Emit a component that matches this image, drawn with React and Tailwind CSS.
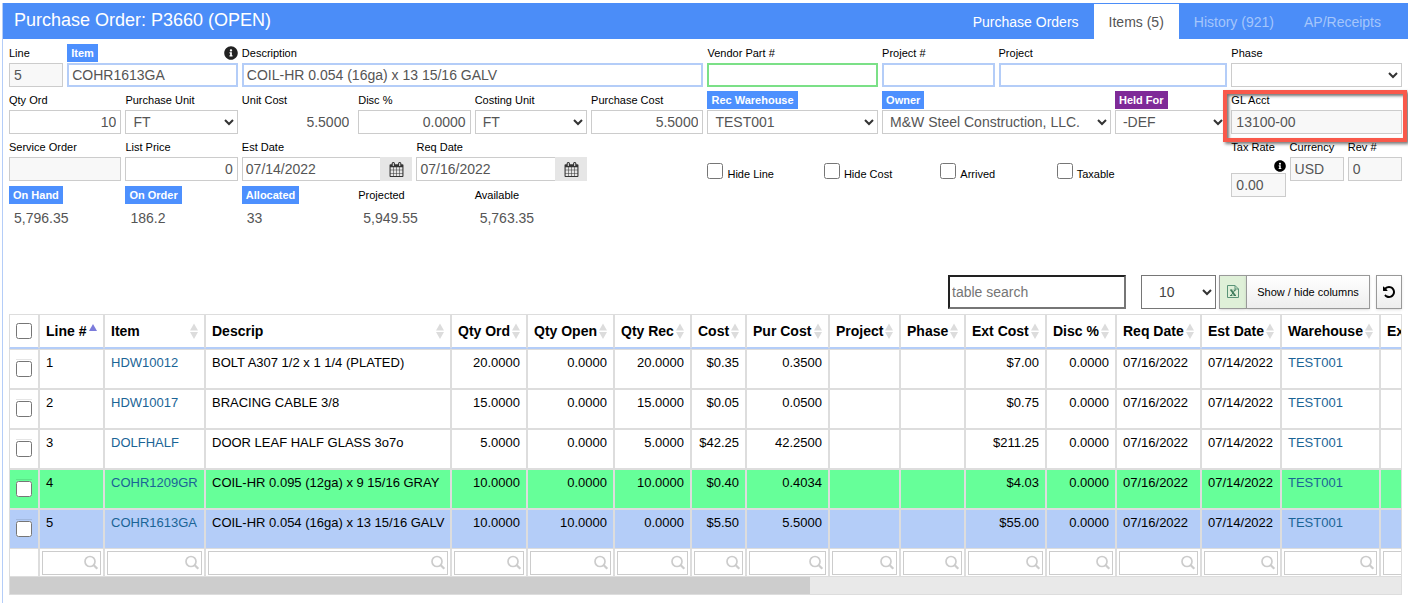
import React, { useState } from "react";
import { FaInfoCircle } from "react-icons/fa";

const lineItems = [
  { line: 1, item: "HDW10012", descrip: "BOLT A307 1/2 x 1 1/4 (PLATED)", qtyOrd: "20.0000", qtyOpen: "0.0000", qtyRec: "20.0000", cost: "$0.35", purCost: "0.3500", extCost: "$7.00", color: "" },
  { line: 2, item: "HDW10017", descrip: "BRACING CABLE 3/8", qtyOrd: "15.0000", qtyOpen: "0.0000", qtyRec: "15.0000", cost: "$0.05", purCost: "0.0500", extCost: "$0.75", color: "" },
  { line: 3, item: "DOLFHALF", descrip: "DOOR LEAF HALF GLASS 3o7o", qtyOrd: "5.0000", qtyOpen: "0.0000", qtyRec: "5.0000", cost: "$42.25", purCost: "42.2500", extCost: "$211.25", color: "" },
  { line: 4, item: "COHR1209GR", descrip: "COIL-HR 0.095 (12ga) x 9 15/16 GRAY", qtyOrd: "10.0000", qtyOpen: "0.0000", qtyRec: "10.0000", cost: "$0.40", purCost: "0.4034", extCost: "$4.03", color: "bg-[#66ff99]" },
  { line: 5, item: "COHR1613GA", descrip: "COIL-HR 0.054 (16ga) x 13 15/16 GALV", qtyOrd: "10.0000", qtyOpen: "10.0000", qtyRec: "0.0000", cost: "$5.50", purCost: "5.5000", extCost: "$55.00", color: "bg-[#b4cdf8]" },
];

const columns = [
  { key: "line", title: "Line #", width: "w-[65px]", sorted: true },
  { key: "item", title: "Item", width: "w-[101px]", link: true },
  { key: "descrip", title: "Descrip", width: "w-[246px]" },
  { key: "qtyOrd", title: "Qty Ord", width: "w-[76px]", right: true },
  { key: "qtyOpen", title: "Qty Open", width: "w-[87px]", right: true },
  { key: "qtyRec", title: "Qty Rec", width: "w-[77px]", right: true },
  { key: "cost", title: "Cost", width: "w-[55px]", right: true },
  { key: "purCost", title: "Pur Cost", width: "w-[83px]", right: true },
  { key: "project", title: "Project", width: "w-[71px]" },
  { key: "phase", title: "Phase", width: "w-[65px]" },
  { key: "extCost", title: "Ext Cost", width: "w-[81px]", right: true },
  { key: "disc", title: "Disc %", width: "w-[70px]", right: true },
  { key: "reqDate", title: "Req Date", width: "w-[85px]" },
  { key: "estDate", title: "Est Date", width: "w-[80px]" },
  { key: "warehouse", title: "Warehouse", width: "w-[99px]", link: true },
  { key: "extWeight", title: "Ext Weight", width: "w-[104px]", right: true },
];

// Same on every line of this order
const defaults = { disc: "0.0000", reqDate: "07/16/2022", estDate: "07/14/2022", warehouse: "TEST001" };

const inputBase = "block h-6 w-full min-w-0 text-sm text-[#555] outline-none";
const borders = {
  gray: "border border-[#ccc] px-1",
  blue: "border-2 border-[#b4cdf8] px-[3px]",
  green: "border-2 border-[#7be087] px-[3px]",
  none: "border border-transparent px-1",
};

const CalendarIcon = () => (
  <svg className="h-[15px] w-[15px]" viewBox="0 0 1792 1792" fill="#333">
    <path d="M192 1664h288v-288h-288v288zM544 1664h320v-288h-320v288zM192 1312h288v-320h-288v320zM544 1312h320v-320h-320v320zM192 928h288v-288h-288v288zM928 1664h320v-288h-320v288zM544 928h320v-288h-320v288zM1312 1664h288v-288h-288v288zM928 1312h320v-320h-320v320zM576 448v-288q0-13-9.5-22.5t-22.5-9.5h-64q-13 0-22.5 9.5t-9.5 22.5v288q0 13 9.5 22.5t22.5 9.5h64q13 0 22.5-9.5t9.5-22.5zM1312 1312h288v-320h-288v320zM928 928h320v-288h-320v288zM1312 928h288v-288h-288v288zM1344 448v-288q0-13-9.5-22.5t-22.5-9.5h-64q-13 0-22.5 9.5t-9.5 22.5v288q0 13 9.5 22.5t22.5 9.5h64q13 0 22.5-9.5t9.5-22.5zM1728 384v1280q0 52-38 90t-90 38h-1408q-52 0-90-38t-38-90v-1280q0-52 38-90t90-38h128v-96q0-66 47-113t113-47h64q66 0 113 47t47 113v96h384v-96q0-66 47-113t113-47h64q66 0 113 47t47 113v96h128q52 0 90 38t38 90z" />
  </svg>
);

const UndoIcon = () => (
  <svg className="h-[14px] w-[14px]" viewBox="0 0 1792 1792" fill="#000">
    <path d="M1664 896q0 156-61 298t-164 245-245 164-298 61q-172 0-327-72.5t-264-204.5q-7-10-6.5-22.5t8.5-20.5l137-138q10-9 25-9 16 2 23 12 73 95 179 147t225 52q104 0 198.5-40.5t163.5-109.5 109.5-163.5 40.5-198.5-40.5-198.5-109.5-163.5-163.5-109.5-198.5-40.5q-98 0-188 35.5t-160 101.5l137 138q31 30 14 69-17 40-59 40h-448q-26 0-45-19t-19-45v-448q0-42 40-59 39-17 69 14l130 129q107-101 244.5-156.5t284.5-55.5q156 0 298 61t245 164 164 245 61 298z" />
  </svg>
);

const ExcelIcon = () => (
  <svg className="h-[14px] w-3" viewBox="0 0 12 14" fill="none" stroke="#5a9478">
    <path d="M0.5 0.5h7.5l3.5 3.5v8.5h-11z" />
    <path d="M8 0.5v3.5h3.5" />
    <path d="M4 5l4 5.5" stroke="#3f7d5d" strokeWidth="1.8" />
    <path d="M8 5l-4 5.5M3 5h2.4M6.6 5h2.4M3 10.5h2.4M6.6 10.5h2.4" stroke="#3f7d5d" />
  </svg>
);

const SearchIcon = () => (
  <svg className="pointer-events-none absolute right-[2px] top-1 h-4 w-4" viewBox="0 0 16 16" fill="none" stroke="#ccc">
    <circle cx="7" cy="6.5" r="5" strokeWidth="1.7" />
    <path d="M10.5 10l3.8 3.8" strokeWidth="2.2" />
  </svg>
);

const Chevron = ({ right }) => (
  <svg className={`pointer-events-none absolute top-1/2 h-2 w-[10px] -translate-y-1/2 ${right}`} viewBox="0 0 10 8" fill="none" stroke="#333" strokeWidth="2">
    <path d="M1 2l4 4 4-4" />
  </svg>
);

const SortIcon = ({ sorted }) =>
  sorted ? (
    <svg className="h-4 w-2 shrink-0" viewBox="0 0 8 16" fill="#7b7bdb">
      <path d="M4 1l4 7H0z" />
    </svg>
  ) : (
    <svg className="h-4 w-2 shrink-0" viewBox="0 0 8 16" fill="#dcdcdc">
      <path d="M4 0.5l4 7H0zM4 16l4-7H0z" />
    </svg>
  );

const Label = ({ id, text, tag }) =>
  tag ? (
    <label htmlFor={id} className={`block px-1 text-[11px] font-bold leading-[18px] whitespace-nowrap text-white ${tag}`}>
      {text}
    </label>
  ) : (
    <label htmlFor={id} className="block text-[11px] leading-[18px] whitespace-nowrap text-black">
      {text}
    </label>
  );

const Field = ({ id, label, span, tag, info, children }) => (
  <div className={`min-w-0 ${span}`}>
    <div className="flex h-[23px] items-center justify-between pt-[2px]">
      <Label id={id} text={label} tag={tag} />
      {info && <FaInfoCircle className="h-[14px] w-[14px] shrink-0 text-[#222]" />}
    </div>
    {children}
  </div>
);

const TextField = ({ value = "", border = "gray", right, readOnly, ...rest }) => (
  <Field {...rest}>
    <input
      id={rest.id}
      type="text"
      defaultValue={value}
      readOnly={readOnly}
      className={`${inputBase} ${borders[border]} ${right ? "text-right" : ""} ${readOnly && border !== "none" ? "bg-[#f8f8f8]" : "bg-white"}`}
    />
  </Field>
);

const SelectField = ({ value, ...rest }) => (
  <Field {...rest}>
    <div className="relative">
      <select id={rest.id} className="block h-6 w-full appearance-none border border-[#ccc] bg-white pl-[7px] text-sm text-[#555]">
        <option>{value}</option>
      </select>
      <Chevron right="right-1" />
    </div>
  </Field>
);

const DateField = ({ value, ...rest }) => (
  <Field {...rest}>
    <div className="flex">
      <input id={rest.id} type="text" defaultValue={value} className="h-6 min-w-0 flex-1 border border-r-0 border-[#ccc] px-[3px] text-sm text-[#555] outline-none" />
      <button aria-label="Pick date" className="flex h-6 w-8 items-center justify-center bg-[#e6e6e6]">
        <CalendarIcon />
      </button>
    </div>
  </Field>
);

const CheckField = ({ id, label }) => (
  <div className="col-span-2 flex items-end gap-1">
    <input id={id} type="checkbox" className="mb-[2px] h-4 w-4" />
    <label htmlFor={id} className="text-[11px] leading-[14px] text-black">
      {label}
    </label>
  </div>
);

const Stat = ({ label, value, tag }) => (
  <div className="col-span-2">
    <div className="flex h-[23px] items-center">
      <span className={tag ? "bg-[#4d90fe] px-1 text-[11px] font-bold leading-[18px] text-white" : "text-[11px] leading-[18px] text-black"}>{label}</span>
    </div>
    <div className="px-[5px] text-sm leading-6 text-[#555]">{value}</div>
  </div>
);

const OrderForm = () => (
  <div className="grid grid-cols-24 gap-x-1 pt-px">
    <TextField id="line" label="Line" value="5" span="col-span-1" readOnly />
    <TextField id="item" label="Item" value="COHR1613GA" span="col-span-3" border="blue" tag="bg-[#4d90fe]" info />
    <TextField id="description" label="Description" value="COIL-HR 0.054 (16ga) x 13 15/16 GALV" span="col-span-8" border="blue" />
    <TextField id="vendor-part" label="Vendor Part #" span="col-span-3" border="green" />
    <TextField id="project-no" label="Project #" span="col-span-2" border="blue" />
    <TextField id="project" label="Project" span="col-span-4" border="blue" />
    <SelectField id="phase" label="Phase" value="" span="col-span-3" />

    <TextField id="qty-ord" label="Qty Ord" value="10" span="col-span-2" right />
    <SelectField id="purchase-unit" label="Purchase Unit" value="FT" span="col-span-2" />
    <TextField id="unit-cost" label="Unit Cost" value="5.5000" span="col-span-2" border="none" right readOnly />
    <TextField id="disc" label="Disc %" value="0.0000" span="col-span-2" right />
    <SelectField id="costing-unit" label="Costing Unit" value="FT" span="col-span-2" />
    <TextField id="purchase-cost" label="Purchase Cost" value="5.5000" span="col-span-2" right />
    <SelectField id="rec-warehouse" label="Rec Warehouse" value="TEST001" span="col-span-3" tag="bg-[#4d90fe]" />
    <SelectField id="owner" label="Owner" value="M&W Steel Construction, LLC." span="col-span-4" tag="bg-[#4d90fe]" />
    <SelectField id="held-for" label="Held For" value="-DEF" span="col-span-2" tag="bg-[#7f2a98]" />
    <div className="relative col-span-3">
      <TextField id="gl-acct" label="GL Acct" value="13100-00" span="" readOnly />
      {/* Highlight frame around the account */}
      <div className="pointer-events-none absolute -right-[5px] -bottom-2 -left-2 top-[3px] border-4 border-[#f9594b] shadow-[2px_2px_3px_#0008,inset_2px_2px_3px_#0008]" />
    </div>

    <TextField id="service-order" label="Service Order" span="col-span-2" readOnly />
    <TextField id="list-price" label="List Price" value="0" span="col-span-2" right />
    <DateField id="est-date" label="Est Date" value="07/14/2022" span="col-span-3" />
    <DateField id="req-date" label="Req Date" value="07/16/2022" span="col-span-3" />
    <div className="col-span-2" />
    <CheckField id="hide-line" label="Hide Line" />
    <CheckField id="hide-cost" label="Hide Cost" />
    <CheckField id="arrived" label="Arrived" />
    <CheckField id="taxable" label="Taxable" />
    <div className="col-span-1" />
    <div className="h-[47px]">
      <div className="flex h-[23px] items-center pt-[2px]">
        <Label id="tax-rate" text="Tax Rate" />
      </div>
      <FaInfoCircle className="mt-[3px] mb-px ml-auto h-3 w-3 text-black" />
      <input id="tax-rate" type="text" readOnly defaultValue="0.00" className={`${inputBase} ${borders.gray} bg-[#f8f8f8]`} />
    </div>
    <TextField id="currency" label="Currency" value="USD" span="col-span-1" readOnly />
    <TextField id="rev" label="Rev #" value="0" span="col-span-1" readOnly />

    <div className="col-span-full mt-[2px] grid grid-cols-subgrid">
      <Stat label="On Hand" value="5,796.35" tag />
      <Stat label="On Order" value="186.2" tag />
      <Stat label="Allocated" value="33" tag />
      <Stat label="Projected" value="5,949.55" />
      <Stat label="Available" value="5,763.35" />
    </div>
  </div>
);

const Toolbar = () => (
  <div className="flex h-[34px] justify-end">
    <input
      type="text"
      aria-label="table search"
      placeholder="table search"
      className="w-[178px] border-2 border-t-[#222] border-r-[#767676] border-b-[#767676] border-l-[#222] px-[2px] text-sm outline-none placeholder:text-[#757575]"
    />
    <div className="relative ml-[15px] w-[75px]">
      <select aria-label="Rows per page" className="h-full w-full appearance-none border border-[#767676] bg-white pl-[17px] text-sm text-[#444]">
        <option>10</option>
      </select>
      <Chevron right="right-1" />
    </div>
    <button aria-label="Export to Excel" className="ml-[3px] flex w-[27px] items-center justify-center border border-r-0 border-[#999] bg-[#dff0d8] shadow">
      <ExcelIcon />
    </button>
    <button className="w-[124px] border border-[#999] bg-linear-to-b from-white to-[#eee] text-[11px] text-black shadow">Show / hide columns</button>
    <button aria-label="Reset" className="ml-[6px] flex w-[26px] items-center justify-center border border-[#999] bg-linear-to-b from-white to-[#eee] shadow">
      <UndoIcon />
    </button>
  </div>
);

const ItemsTable = () => (
  <div className="mt-[5px] overflow-hidden border-r border-[#ddd]">
    <table className="w-[1475px] table-fixed border-separate border-spacing-0 text-[13px] leading-4 text-black">
      <thead>
        <tr className="h-[35px]">
          <th className="w-[30px] border border-b-2 border-[#ddd] border-b-[#b4cdf8]">
            <input type="checkbox" aria-label="Select all lines" className="mx-auto block h-4 w-4" />
          </th>
          {columns.map((col) => (
            <th key={col.key} className={`border border-b-2 border-[#ddd] border-b-[#b4cdf8] px-1.5 text-left text-sm leading-4 whitespace-nowrap ${col.width}`}>
              <div className="flex items-center justify-between">
                {col.title}
                <SortIcon sorted={col.sorted} />
              </div>
            </th>
          ))}
        </tr>
      </thead>
      <tbody>
        {lineItems.map((row) => (
          <tr key={row.line} className={`h-10 ${row.color}`}>
            <td className="border border-[#ddd] px-1.5 pt-[9px] align-top">
              <div className="border-t border-black/10 pt-px">
                <input type="checkbox" aria-label={`Select line ${row.line}`} className="block h-4 w-4" />
              </div>
            </td>
            {columns.map((col) => (
              <td key={col.key} className={`border border-[#ddd] px-1.5 pt-[5px] align-top whitespace-nowrap ${col.right ? "text-right" : ""}`}>
                {col.link ? (
                  <a href={`#${col.key}`} className="text-[#1a6496]">
                    {row[col.key] ?? defaults[col.key]}
                  </a>
                ) : (
                  row[col.key] ?? defaults[col.key]
                )}
              </td>
            ))}
          </tr>
        ))}
      </tbody>
      <tfoot>
        <tr className="h-7">
          <td className="border-x border-b border-[#ddd]" />
          {columns.map((col) => (
            <td key={col.key} className="border-x border-b border-[#ddd] px-[2px]">
              <div className="relative">
                <input type="text" aria-label={`Filter ${col.title}`} className="block h-6 w-full border border-[#ccc] pr-5 pl-1 outline-none" />
                <SearchIcon />
              </div>
            </td>
          ))}
        </tr>
      </tfoot>
    </table>
    {/* Horizontal scrollbar */}
    <div className="h-[18px] border-b border-l border-[#ddd] bg-[#e9e9e9]">
      <div className="h-full w-23/40 bg-[#cdcdcd]" />
    </div>
  </div>
);

const tabs = ["Purchase Orders", "Items (5)", "History (921)", "AP/Receipts"];

const App = () => {
  const [activeTab, setActiveTab] = useState("Items (5)");

  return (
    <div className="min-h-screen bg-white pt-[3px] pl-[2px] font-['Liberation_Sans',Arial,sans-serif]">
      <div className="min-h-[calc(100vh-3px)] border-l border-[#b4cdf8]">
        {/* Header */}
        <header className="flex h-9 justify-between bg-[#4b8df8] pt-px pr-3 pl-[11px]">
          <h1 className="text-lg leading-8 text-white">Purchase Order: P3660 (OPEN)</h1>
          <nav className="flex text-sm">
            {tabs.map((tab, i) => (
              <button
                key={tab}
                onClick={() => setActiveTab(tab)}
                className={`px-[15px] ${tab === activeTab ? "bg-white text-[#555]" : i === 0 ? "text-white" : "text-[#a5c6fb]"}`}
              >
                {tab}
              </button>
            ))}
          </nav>
        </header>

        <main className="px-1.5">
          <OrderForm />
          <div className="mt-[45px]">
            <Toolbar />
            <ItemsTable />
          </div>
        </main>
      </div>
    </div>
  );
};

export default App;
